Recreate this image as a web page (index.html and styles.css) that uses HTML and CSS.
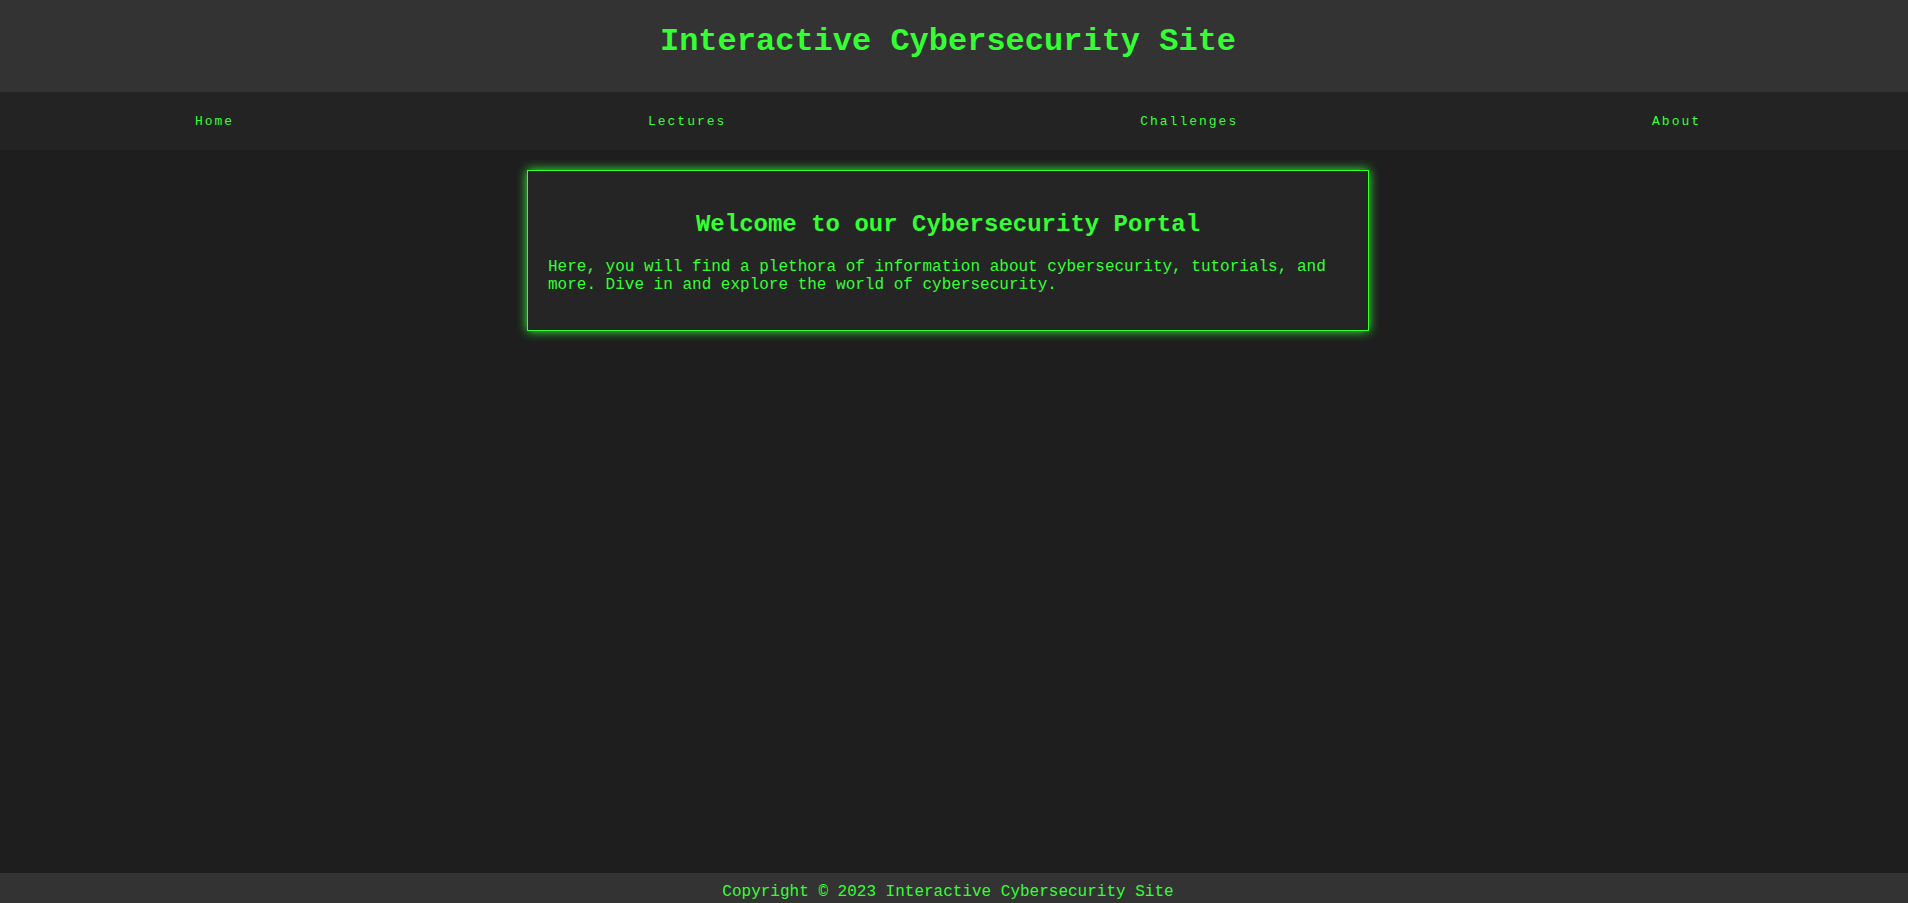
FILE: index.html
```html
<!DOCTYPE html>
<html lang="en">
<head>
<meta charset="utf-8">
<title>Interactive Cybersecurity Site</title>
<link rel="stylesheet" href="styles.css">
</head>
<body>
<div class="page">
  <header class="site-header">
    <h1 class="site-title">Interactive Cybersecurity Site</h1>
  </header>
  <nav class="site-nav">
    <ul class="nav-list">
      <li><a class="nav-link" href="#">Home</a></li>
      <li><a class="nav-link" href="#">Lectures</a></li>
      <li><a class="nav-link" href="#">Challenges</a></li>
      <li><a class="nav-link" href="#">About</a></li>
    </ul>
  </nav>
  <main class="site-main">
    <section class="welcome-card">
      <h2 class="welcome-title">Welcome to our Cybersecurity Portal</h2>
      <p class="welcome-text">Here, you will find a plethora of information about cybersecurity, tutorials, and more. Dive in and explore the world of cybersecurity.</p>
    </section>
  </main>
  <footer class="site-footer">
    <p class="footer-text">Copyright &copy; 2023 Interactive Cybersecurity Site</p>
  </footer>
</div>
</body>
</html>
```

FILE: styles.css
```css
html, body {
  margin: 0;
  padding: 0;
  overflow: hidden;
}

body {
  background: #1e1e1e;
  color: #33ff33;
  font-family: "Liberation Mono", "Courier New", monospace;
  font-size: 16px;
}

.page {
  display: flex;
  flex-direction: column;
  min-height: calc(100vh + 8px);
  width: calc(100% + 12px);
  margin-left: -12px;
}

.site-header {
  background: #333333;
  padding: 23px 0 32px;
  text-align: center;
}

.site-title {
  margin: 0;
  font-size: 32px;
  font-weight: bold;
  color: #33ff33;
}

.site-nav {
  background: #232323;
}

.nav-list {
  list-style: none;
  margin: 0;
  padding: 0;
  height: 58px;
  display: flex;
  justify-content: space-around;
  align-items: center;
}

.nav-link {
  color: #33ff33;
  text-decoration: none;
  font-size: 13px;
  letter-spacing: 2px;
}

.site-main {
  flex: 1;
  padding: 20px 0;
}

.welcome-card {
  max-width: 800px;
  margin: 0 auto;
  padding: 20px;
  background: #252525;
  border: 1px solid #33ff33;
  box-shadow: 0 0 10px #33ff33;
}

.welcome-title {
  text-align: center;
  font-size: 24px;
  margin: 20px 0;
}

.welcome-text {
  margin: 16px 0;
}

.site-footer {
  background: #333333;
  padding: 10px 0;
  text-align: center;
}

.footer-text {
  margin: 0;
}
```
